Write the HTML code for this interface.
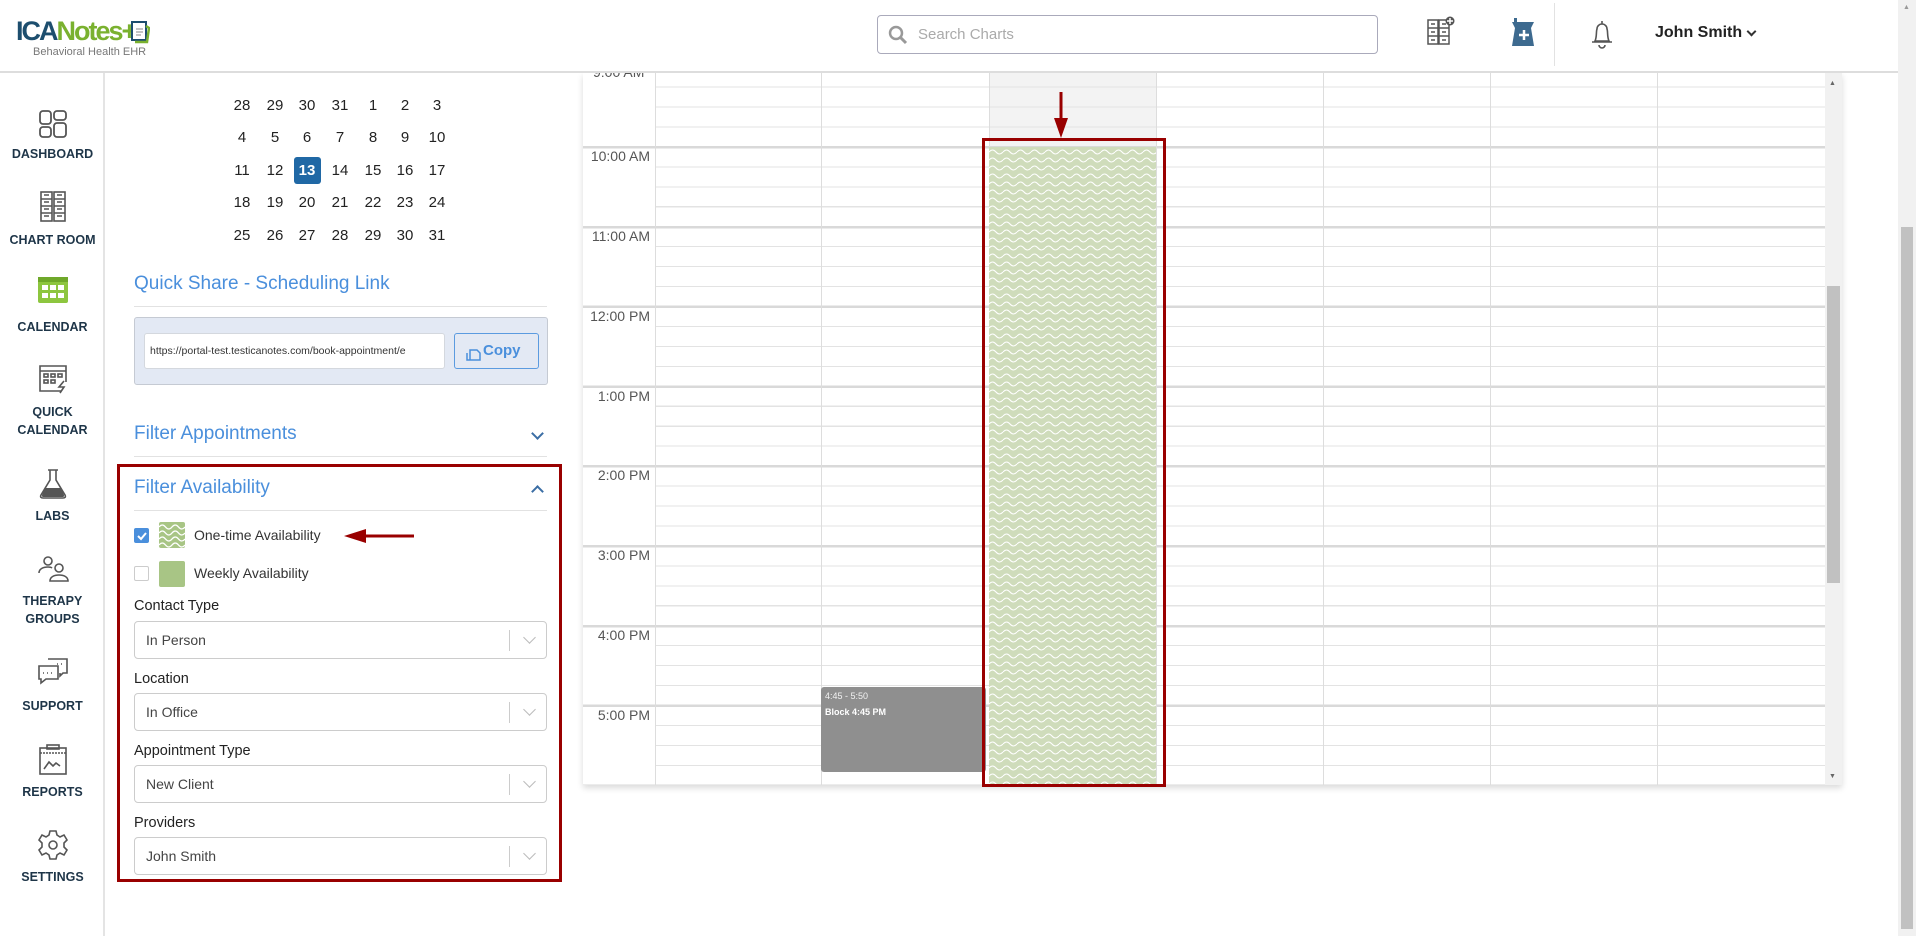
<!DOCTYPE html>
<html><head><meta charset="utf-8">
<style>
*{box-sizing:border-box;margin:0;padding:0}
body{width:1916px;height:936px;overflow:hidden;background:#fff;font-family:"Liberation Sans",sans-serif;position:relative;color:#333}
.a{position:absolute}
.hdr{left:0;top:0;width:1898px;height:73px;background:#fff;border-bottom:2px solid #ddd;z-index:5}
.side{left:0;top:73px;width:105px;height:863px;background:#fff;border-right:2px solid #e4e4e4}
.lbl{position:absolute;left:0;width:105px;text-align:center;font-size:12.5px;font-weight:bold;color:#1e3548;line-height:18px}
.ic{position:absolute;left:37px;width:32px;height:32px}
.cd{position:absolute;width:30px;text-align:center;font-size:15px;color:#222}
.h{font-size:19px;color:#4a8fdc}
.hr{height:1px;background:#e2e2e2}
.flab{font-size:14.5px;color:#222}
.sel{width:413px;height:38px;border:1px solid #ccc;border-radius:4px;background:#fff}
.sel span{position:absolute;left:11px;top:10px;font-size:14px;color:#444}
.sel i{position:absolute;right:36px;top:8px;width:1px;height:21px;background:#ccc}
.sel b{position:absolute;right:12px;top:11px;width:9px;height:9px;border-right:1.5px solid #bbb;border-bottom:1.5px solid #bbb;transform:rotate(45deg)}
.tm{position:absolute;left:583px;width:67px;text-align:right;font-size:14px;color:#555}
.vl{position:absolute;top:73px;height:712px;width:1px;background:#ddd}
</style></head><body>

<div class="a hdr">
  <div class="a" style="left:16px;top:15px;font-size:27px;font-weight:bold;letter-spacing:-2px;line-height:32px;white-space:nowrap"><span style="color:#1d4e6e">ICA</span><span style="color:#7ab12f">Notes+</span></div>
  <svg class="a" style="left:130px;top:18px" width="20" height="26"><rect x="2" y="4" width="14" height="18" fill="#fff" stroke="#1d4e6e" stroke-width="2"/><path d="M16 8 L19 10 L17 24 L5 24" fill="none" stroke="#7ab12f" stroke-width="2.5"/><path d="M6 11h7M6 14h7M6 17h5" stroke="#888"/></svg>
  <div class="a" style="left:33px;top:46px;font-size:11px;color:#777">Behavioral Health EHR</div>
  <div class="a" style="left:877px;top:15px;width:501px;height:39px;border:1px solid #aab;border-radius:4px">
    <svg class="a" style="left:10px;top:9px" width="20" height="20"><circle cx="8" cy="8" r="6" fill="none" stroke="#999" stroke-width="2.5"/><path d="M12 12l6 6" stroke="#999" stroke-width="3"/></svg>
    <span class="a" style="left:40px;top:10px;font-size:15px;color:#aaa">Search Charts</span>
  </div>
  <svg class="a" style="left:1427px;top:16px" width="28" height="29"><g fill="#fff" stroke="#555" stroke-width="1.5"><rect x="1" y="4" width="10" height="24"/><rect x="12" y="4" width="10" height="24"/><path d="M1 12h10M1 20h10M12 12h10M12 20h10M4 8h4M15 8h4M4 16h4M15 16h4M4 24h4M15 24h4"/></g><circle cx="23" cy="5" r="4.5" fill="#555"/><path d="M23 2v6M20 5h6" stroke="#fff" stroke-width="1.5"/></svg>
  <svg class="a" style="left:1510px;top:18px" width="28" height="30"><path d="M4 0h3v4h17l-3 6 3 18H2l3-18-3-6h2z" fill="#3d6a8f"/><path d="M14 12v10M9 17h10" stroke="#fff" stroke-width="2.5"/></svg>
  <div class="a" style="left:1554px;top:3px;width:1px;height:63px;background:#e2e2e2"></div>
  <svg class="a" style="left:1587px;top:19px" width="30" height="30"><path d="M15 2v3M8 22c2-4 1-10 2-12a5 5 0 0110 0c1 2 0 8 2 12zM5 23h20M12 26a3 3 0 006 0" fill="none" stroke="#555" stroke-width="1.6"/></svg>
  <span class="a" style="left:1655px;top:24px;font-size:16px;font-weight:bold;color:#222">John Smith</span>
  <div class="a" style="left:1748px;top:28px;width:7px;height:7px;border-right:2px solid #333;border-bottom:2px solid #333;transform:rotate(45deg)"></div>
</div>

<div class="a side">
  <svg class="ic" style="top:35px" viewBox="0 0 32 32"><g fill="none" stroke="#555" stroke-width="1.8"><rect x="3" y="3" width="11" height="13" rx="3"/><rect x="17" y="3" width="12" height="9" rx="3"/><rect x="3" y="19" width="11" height="10" rx="3"/><rect x="17" y="15" width="12" height="14" rx="3"/></g></svg>
  <div class="lbl" style="top:72px">DASHBOARD</div>
  <svg class="ic" style="top:118px" viewBox="0 0 32 32"><g fill="none" stroke="#555" stroke-width="1.6"><rect x="4" y="1" width="11" height="29"/><rect x="17" y="1" width="11" height="29"/><path d="M4 8h11M4 15h11M4 22h11M17 8h11M17 15h11M17 22h11M7 4h5M20 4h5M7 11h5M20 11h5M7 18h5M20 18h5M7 25h5M20 25h5"/></g></svg>
  <div class="lbl" style="top:158px">CHART ROOM</div>
  <svg class="ic" style="top:201px" viewBox="0 0 32 32"><rect x="1" y="3" width="30" height="26" rx="2" fill="#8dc63f"/><rect x="1" y="3" width="30" height="5" fill="#6fa82a"/><g fill="#fff"><rect x="5" y="11" width="6" height="5"/><rect x="13" y="11" width="6" height="5"/><rect x="21" y="11" width="6" height="5"/><rect x="5" y="19" width="6" height="5"/><rect x="13" y="19" width="6" height="5"/><rect x="21" y="19" width="6" height="5"/></g></svg>
  <div class="lbl" style="top:245px">CALENDAR</div>
  <svg class="ic" style="top:290px" viewBox="0 0 32 32"><g fill="none" stroke="#555" stroke-width="1.6"><path d="M24 28H3V3h26v16"/><path d="M3 8h26"/><rect x="7" y="11" width="4" height="3"/><rect x="14" y="11" width="4" height="3"/><rect x="21" y="11" width="4" height="3"/><rect x="7" y="17" width="4" height="3"/><rect x="14" y="17" width="4" height="3"/><path d="M27 18l-5 6h5l-4 6"/></g></svg>
  <div class="lbl" style="top:330px">QUICK<br>CALENDAR</div>
  <svg class="ic" style="top:395px" viewBox="0 0 32 32"><path d="M11 2h10M13 2v10L4 27c-1 2 0 3 2 3h20c2 0 3-1 2-3L19 12V2" fill="none" stroke="#555" stroke-width="1.6"/><path d="M8 20h16l3 7c0 1 0 2-1 2H6c-1 0-1-1-1-2z" fill="#555"/></svg>
  <div class="lbl" style="top:434px">LABS</div>
  <svg class="ic" style="top:480px" viewBox="0 0 32 32"><g fill="none" stroke="#555" stroke-width="1.6"><circle cx="11" cy="8" r="4"/><path d="M2 20c0-4 4-6 9-6 2 0 3 0 4 1"/><circle cx="22" cy="15" r="4"/><path d="M13 28c0-4 4-6 9-6s9 2 9 6z"/></g></svg>
  <div class="lbl" style="top:519px">THERAPY<br>GROUPS</div>
  <svg class="ic" style="top:583px" viewBox="0 0 32 32"><g fill="none" stroke="#555" stroke-width="1.6"><path d="M11 3h19v14h-4l-3 3v-3"/><path d="M2 10h19v13H9l-5 4v-4H2z" fill="#fff"/><path d="M6 17h2M10 17h2M14 17h2M20 8h2M24 8h2" stroke-dasharray="1 1"/></g></svg>
  <div class="lbl" style="top:624px">SUPPORT</div>
  <svg class="ic" style="top:671px" viewBox="0 0 32 32"><g fill="none" stroke="#555" stroke-width="1.6"><rect x="3" y="4" width="26" height="26"/><rect x="10" y="1" width="12" height="4"/><path d="M3 9h26" stroke-dasharray="2 1"/><path d="M7 25l5-7 4 4 3-3 4 3"/></g></svg>
  <div class="lbl" style="top:710px">REPORTS</div>
  <svg class="ic" style="top:756px" viewBox="0 0 32 32"><path d="M13 2h6l1 4 3 2 4-2 3 5-3 3v4l3 3-3 5-4-2-3 2-1 4h-6l-1-4-3-2-4 2-3-5 3-3v-4l-3-3 3-5 4 2 3-2z" fill="none" stroke="#555" stroke-width="1.6"/><circle cx="16" cy="16" r="4" fill="none" stroke="#555" stroke-width="1.6"/></svg>
  <div class="lbl" style="top:795px">SETTINGS</div>
</div>

<div class="a" style="left:0;top:0">
<div class="cd" style="left:227px;top:97px">28</div><div class="cd" style="left:260px;top:97px">29</div><div class="cd" style="left:292px;top:97px">30</div><div class="cd" style="left:325px;top:97px">31</div><div class="cd" style="left:358px;top:97px">1</div><div class="cd" style="left:390px;top:97px">2</div><div class="cd" style="left:422px;top:97px">3</div>
<div class="cd" style="left:227px;top:129px">4</div><div class="cd" style="left:260px;top:129px">5</div><div class="cd" style="left:292px;top:129px">6</div><div class="cd" style="left:325px;top:129px">7</div><div class="cd" style="left:358px;top:129px">8</div><div class="cd" style="left:390px;top:129px">9</div><div class="cd" style="left:422px;top:129px">10</div>
<div class="cd" style="left:227px;top:162px">11</div><div class="cd" style="left:260px;top:162px">12</div>
<div class="a" style="left:294px;top:157px;width:27px;height:27px;background:#2068a5;border-radius:3px"></div><div class="cd" style="left:292px;top:162px;color:#fff;font-weight:bold">13</div>
<div class="cd" style="left:325px;top:162px">14</div><div class="cd" style="left:358px;top:162px">15</div><div class="cd" style="left:390px;top:162px">16</div><div class="cd" style="left:422px;top:162px">17</div>
<div class="cd" style="left:227px;top:194px">18</div><div class="cd" style="left:260px;top:194px">19</div><div class="cd" style="left:292px;top:194px">20</div><div class="cd" style="left:325px;top:194px">21</div><div class="cd" style="left:358px;top:194px">22</div><div class="cd" style="left:390px;top:194px">23</div><div class="cd" style="left:422px;top:194px">24</div>
<div class="cd" style="left:227px;top:227px">25</div><div class="cd" style="left:260px;top:227px">26</div><div class="cd" style="left:292px;top:227px">27</div><div class="cd" style="left:325px;top:227px">28</div><div class="cd" style="left:358px;top:227px">29</div><div class="cd" style="left:390px;top:227px">30</div><div class="cd" style="left:422px;top:227px">31</div>
</div>

<div class="a h" style="left:134px;top:273px">Quick Share - Scheduling Link</div>
<div class="a hr" style="left:134px;top:306px;width:413px"></div>
<div class="a" style="left:134px;top:317px;width:414px;height:68px;background:#e3e9f4;border:1px solid #c5cad3;border-radius:3px">
  <div class="a" style="left:9px;top:15px;width:301px;height:36px;background:#fff;border:1px solid #d4d8de;border-radius:3px;overflow:hidden"><span class="a" style="left:5px;top:11px;font-size:10.5px;color:#333;white-space:nowrap">https://portal-test.testicanotes.com/book-appointment/e</span></div>
  <div class="a" style="left:319px;top:15px;width:85px;height:36px;border:1px solid #5b9be0;border-radius:3px"><svg class="a" style="left:11px;top:12px" width="16" height="15"><path d="M4 4h7l3 3v7H4z M1 7v7h10" fill="none" stroke="#4a8fdc" stroke-width="1.5"/></svg><span class="a" style="left:28px;top:8px;font-size:15px;font-weight:bold;color:#4a8fdc">Copy</span></div>
</div>

<div class="a h" style="left:134px;top:423px">Filter Appointments</div>
<div class="a" style="left:533px;top:429px;width:9px;height:9px;border-right:2px solid #3b6ea5;border-bottom:2px solid #3b6ea5;transform:rotate(45deg)"></div>
<div class="a hr" style="left:134px;top:456px;width:413px"></div>

<div class="a" style="left:117px;top:464px;width:445px;height:418px;border:3px solid #990000"></div>
<div class="a h" style="left:134px;top:477px">Filter Availability</div>
<div class="a" style="left:533px;top:487px;width:9px;height:9px;border-left:2px solid #3b6ea5;border-top:2px solid #3b6ea5;transform:rotate(45deg)"></div>
<div class="a hr" style="left:134px;top:510px;width:413px"></div>
<div class="a" style="left:134px;top:528px;width:15px;height:15px;background:#4a8fdc;border-radius:2px"></div>
<svg class="a" style="left:136px;top:530px" width="11" height="11"><path d="M2 6l3 3 5-6" fill="none" stroke="#fff" stroke-width="2"/></svg>
<svg class="a" style="left:159px;top:522px" width="26" height="26"><rect width="26" height="26" rx="2" fill="#a8c585"/><g fill="none" stroke="#fff" stroke-width="1.3"><path d="M0 5q3.25-4 6.5 0t6.5 0 6.5 0 6.5 0"/><path d="M0 11q3.25-4 6.5 0t6.5 0 6.5 0 6.5 0"/><path d="M0 17q3.25-4 6.5 0t6.5 0 6.5 0 6.5 0"/><path d="M0 23q3.25-4 6.5 0t6.5 0 6.5 0 6.5 0"/></g></svg>
<span class="a" style="left:194px;top:527px;font-size:14px;color:#333">One-time Availability</span>
<svg class="a" style="left:342px;top:526px" width="74" height="20"><path d="M22 10h50" stroke="#990000" stroke-width="3"/><path d="M2 10l22-7v14z" fill="#990000"/></svg>
<div class="a" style="left:134px;top:566px;width:15px;height:15px;border:1px solid #ccc;border-radius:2px"></div>
<div class="a" style="left:159px;top:561px;width:26px;height:26px;background:#a8c585;border-radius:2px"></div>
<span class="a" style="left:194px;top:565px;font-size:14px;color:#333">Weekly Availability</span>

<div class="a flab" style="left:134px;top:598px">Contact Type</div>
<div class="a sel" style="left:134px;top:621px"><span>In Person</span><i></i><b></b></div>
<div class="a flab" style="left:134px;top:671px">Location</div>
<div class="a sel" style="left:134px;top:693px"><span>In Office</span><i></i><b></b></div>
<div class="a flab" style="left:134px;top:743px">Appointment Type</div>
<div class="a sel" style="left:134px;top:765px"><span>New Client</span><i></i><b></b></div>
<div class="a flab" style="left:134px;top:815px">Providers</div>
<div class="a sel" style="left:134px;top:837px"><span>John Smith</span><i></i><b></b></div>

<div class="a" style="left:583px;top:73px;width:1259px;height:712px;background:#fff;box-shadow:0 3px 6px rgba(0,0,0,.15)"></div>
<div class="a" style="left:989px;top:73px;width:167px;height:74px;background:#f3f3f3"></div>
<div class="a" style="left:655px;top:73px;width:1170px;height:712px;background:repeating-linear-gradient(to bottom,transparent 0,transparent 13.5px,#e3e3e3 13.5px,#e3e3e3 14.6px,transparent 14.6px,transparent 19.95px)"></div>
<div class="a" style="left:583px;top:73px;width:1242px;height:712px;background:repeating-linear-gradient(to bottom,transparent 0,transparent 73px,#d9d9d9 73px,#d9d9d9 75.5px,transparent 75.5px,transparent 79.8px)"></div>
<div class="vl" style="left:655px"></div><div class="vl" style="left:821px"></div><div class="vl" style="left:989px"></div><div class="vl" style="left:1156px"></div><div class="vl" style="left:1323px"></div><div class="vl" style="left:1490px"></div><div class="vl" style="left:1657px"></div>
<div class="a" style="left:583px;top:73px;width:70px;height:8px;overflow:hidden"><span class="a" style="left:10px;top:-9px;font-size:14px;color:#555">9:00 AM</span></div>
<div class="tm" style="top:148px">10:00 AM</div>
<div class="tm" style="top:228px">11:00 AM</div>
<div class="tm" style="top:308px">12:00 PM</div>
<div class="tm" style="top:388px">1:00 PM</div>
<div class="tm" style="top:467px">2:00 PM</div>
<div class="tm" style="top:547px">3:00 PM</div>
<div class="tm" style="top:627px">4:00 PM</div>
<div class="tm" style="top:707px">5:00 PM</div>

<svg class="a" style="left:989px;top:147px" width="167" height="638"><defs><pattern id="w" width="14" height="8" patternUnits="userSpaceOnUse"><rect width="14" height="8" fill="#cfdcbb"/><path d="M0 5q3.5-4 7 0t7 0" fill="none" stroke="#fff" stroke-width="1.1"/></pattern></defs><rect width="167" height="638" fill="url(#w)"/></svg>
<div class="a" style="left:821px;top:687px;width:165px;height:85px;background:#8f8f8f;border-radius:3px"><div class="a" style="left:4px;top:4px;font-size:9px;color:#f2f2f2">4:45 - 5:50</div><div class="a" style="left:4px;top:20px;font-size:9px;font-weight:bold;color:#fff">Block 4:45 PM</div></div>
<div class="a" style="left:982px;top:138px;width:184px;height:649px;border:3px solid #990000"></div>
<svg class="a" style="left:1053px;top:92px" width="16" height="46"><path d="M8 0v28" stroke="#990000" stroke-width="3"/><path d="M1 26h14L8 46z" fill="#990000"/></svg>

<div class="a" style="left:1825px;top:73px;width:17px;height:712px;background:#f1f1f1"></div>
<div class="a" style="left:1827px;top:286px;width:13px;height:297px;background:#c1c1c1"></div>
<div class="a" style="left:1829px;top:80px;font-size:7px;color:#666">▲</div>
<div class="a" style="left:1829px;top:773px;font-size:7px;color:#666">▼</div>

<div class="a" style="left:1898px;top:0;width:18px;height:936px;background:#f1f1f1"></div>
<div class="a" style="left:1901px;top:227px;width:12px;height:702px;background:#c1c1c1"></div>
<div class="a" style="left:1903px;top:4px;font-size:7px;color:#999">▲</div>
</body></html>
